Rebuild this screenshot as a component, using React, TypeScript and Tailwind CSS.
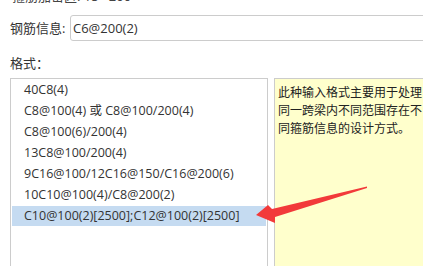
import React from 'react';

const formats = [
  '40C8(4)',
  'C8@100(4) 或 C8@100/200(4)',
  'C8@100(6)/200(4)',
  '13C8@100/200(4)',
  '9C16@100/12C16@150/C16@200(6)',
  '10C10@100(4)/C8@200(2)',
  'C10@100(2)[2500];C12@100(2)[2500]',
];

const font = { fontFamily: '"Open Sans", "Noto Sans CJK SC", sans-serif' };

export default function App() {
  const selected = 6;

  return (
    <div className="relative w-[423px] h-[266px] overflow-hidden bg-white text-[#333]" style={font}>
      {/* previous line, scrolled mostly out of view */}
      <div className="h-[3px] overflow-hidden pl-[12px] text-[13px] leading-[14px] text-[#444]">
        <div className="-mt-[11px] whitespace-nowrap">箍筋加密区: 15 · 200</div>
      </div>

      <div className="flex items-center pl-[10px] mt-[12px]">
        <label className="w-[60px] shrink-0 whitespace-nowrap text-[13px] leading-[16px]">钢筋信息:</label>
        <input
          className="w-[400px] h-[26px] shrink-0 rounded-[3px] border border-[#ccc] pl-[2px] text-[13px] text-[#333] outline-none"
          style={font}
          defaultValue="C6@200(2)"
        />
      </div>

      <div className="pl-[10px] mt-[14px] text-[13px] leading-[16px]">格式：</div>

      <div className="flex gap-[6px] pl-[10px] mt-[7px]">
        <ul className="w-[258px] h-[220px] shrink-0 border border-[#ccc] text-[12.5px]">
          {formats.map((f, i) => (
            <li
              key={f}
              className={`mx-px my-px h-5 flex items-center pl-[12px] whitespace-nowrap ${
                i === selected ? 'bg-[#c5dbf1]' : ''
              }`}
            >
              {f}
            </li>
          ))}
        </ul>
        <div
          className="w-[200px] h-[220px] shrink-0 border border-[#ccc] bg-[#ffffcc] pl-[3px] pt-[4px] text-[12px] leading-[18px] text-[#222] whitespace-nowrap"
          style={{ fontFamily: '"Noto Sans CJK SC", sans-serif' }}
        >
          <p>此种输入格式主要用于处理</p>
          <p>同一跨梁内不同范围存在不</p>
          <p>同箍筋信息的设计方式。</p>
        </div>
      </div>

      {/* annotation arrow */}
      <svg className="absolute left-0 top-0 pointer-events-none" width="423" height="266">
        <polygon
          points="256,215 268,205 272,209 367,186.5 367,188 275,217 275,223"
          fill="#f23a3a"
        />
      </svg>
    </div>
  );
}
